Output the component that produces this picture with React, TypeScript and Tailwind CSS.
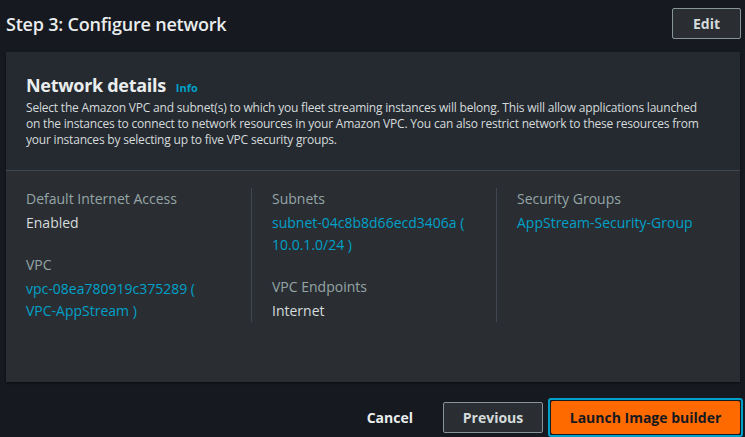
const Field = ({ label, children }: { label: string; children: React.ReactNode }) => (
  <div>
    <div className="text-[14px] leading-[22px] text-[#95a5a6]">{label}</div>
    <div className="mt-[2px] text-[14px] leading-[22px] font-medium">{children}</div>
  </div>
);

const Link = ({ children }: { children: React.ReactNode }) => (
  <span className="text-[#00a1c9]">{children}</span>
);

export default function App() {
  return (
    <div className="w-[745px] h-[437px] overflow-hidden bg-[#16191f] font-['Open_Sans',sans-serif] text-[#d5dbdb]">
      {/* Step header */}
      <div className="flex h-[52px] items-start justify-between pl-[6px] pr-[4px] pt-[8px]">
        <h1 className="mt-[3px] text-[18px] leading-[26px] font-semibold tracking-[-0.2px] text-[#eaeded]">Step 3: Configure network</h1>
        <button className="h-[31px] w-[69px] rounded-[2px] border border-[#879596] bg-[#2a2e33] text-[14px] font-bold text-[#d5dbdb]">
          Edit
        </button>
      </div>

      {/* Container */}
      <div className="ml-[6px] w-[734px] bg-[#2a2e33] shadow-[0_1px_2px_rgba(0,0,0,0.5)]">
        <div className="border-b border-[#414750] bg-[#252a31] px-[20px] pt-[22px] pb-[22px]">
          <div className="flex items-baseline gap-[10px]">
            <h2 className="text-[18px] leading-[23px] font-bold tracking-[-0.3px] text-[#eaeded]">Network details</h2>
            <span className="text-[11px] font-bold text-[#00a1c9]">Info</span>
          </div>
          <p className="mt-[3px] whitespace-nowrap text-[12px] leading-[16px] tracking-[-0.2px] text-[#d5dbdb]">
            Select the Amazon VPC and subnet(s) to which you fleet streaming instances will belong. This will allow applications launched
            <br />
            on the instances to connect to network resources in your Amazon VPC. You can also restrict network to these resources from
            <br />
            your instances by selecting up to five VPC security groups.
          </p>
        </div>

        <div className="grid grid-cols-[225px_245px_1fr] px-[20px] pt-[17px] pb-[60px]">
          <div className="flex flex-col gap-[20px]">
            <Field label="Default Internet Access">Enabled</Field>
            <Field label="VPC">
              <Link>
                vpc-08ea780919c375289 (
                <br />
                VPC-AppStream )
              </Link>
            </Field>
          </div>
          <div className="flex flex-col gap-[20px] border-l border-[#414750] pl-[20px]">
            <Field label="Subnets">
              <Link>
                subnet-04c8b8d66ecd3406a (
                <br />
                10.0.1.0/24 )
              </Link>
            </Field>
            <Field label="VPC Endpoints">Internet</Field>
          </div>
          <div className="border-l border-[#414750] pl-[20px]">
            <Field label="Security Groups">
              <Link>AppStream-Security-Group</Link>
            </Field>
          </div>
        </div>
      </div>

      {/* Footer actions */}
      <div className="mt-[16px] flex items-center justify-end pr-[2px]">
        <button className="mr-[30px] text-[14px] font-bold text-[#eaeded]">Cancel</button>
        <button className="mr-[5px] h-[31px] w-[100px] rounded-[2px] border border-[#879596] bg-[#2a2e33] text-[14px] font-bold text-[#d5dbdb]">
          Previous
        </button>
        <div className="rounded-[3px] border-2 border-[#00a1c9] p-[1px] bg-[#16191f]">
          <button className="h-[33px] w-[189px] rounded-[2px] bg-[#ff6a00] text-[14px] font-bold text-[#16191f]">
            Launch Image builder
          </button>
        </div>
      </div>
    </div>
  );
}
